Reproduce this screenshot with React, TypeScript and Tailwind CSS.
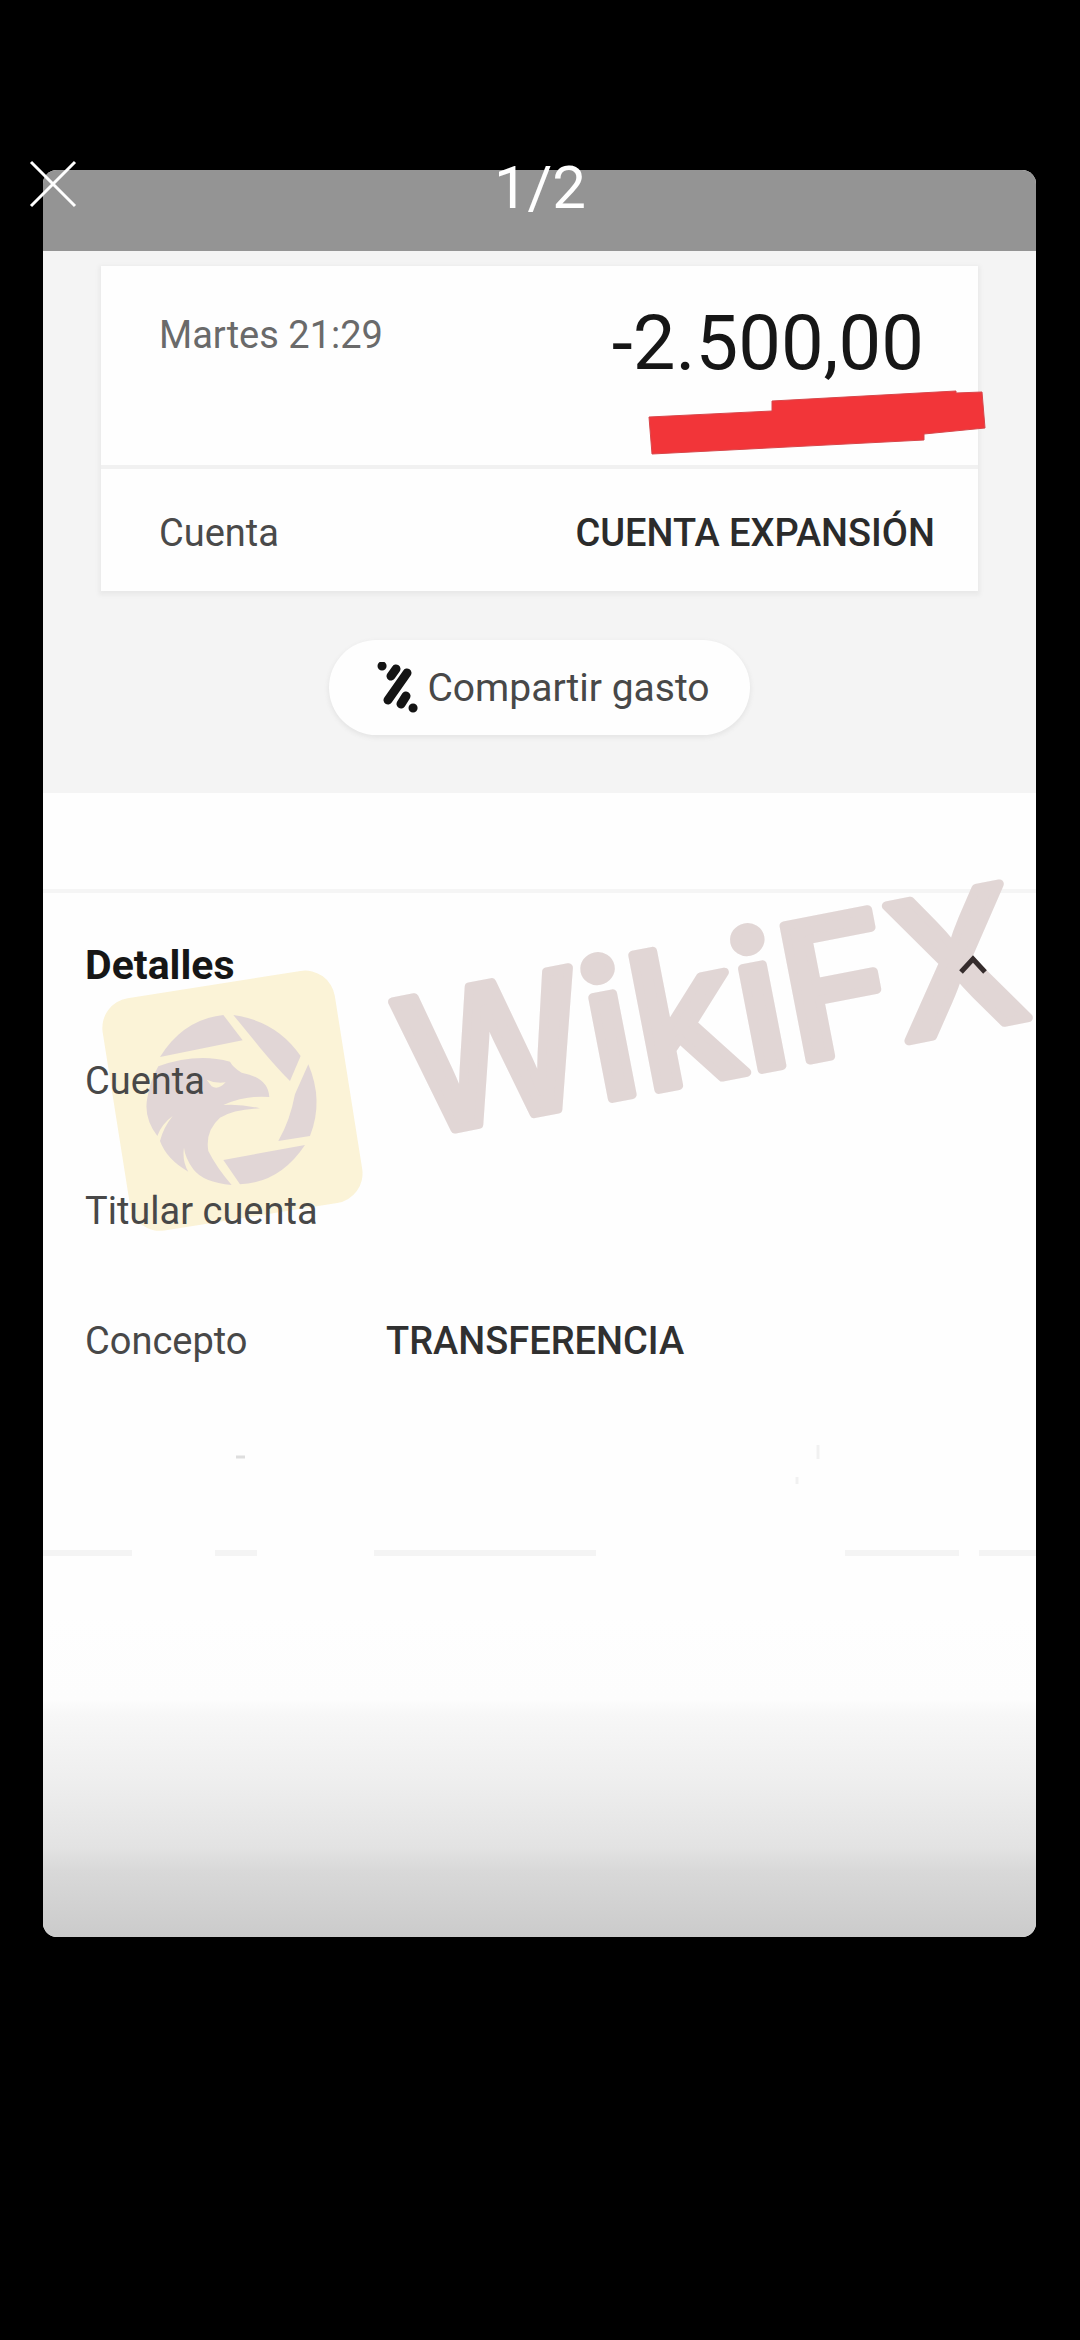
import * as React from 'react';

type Detail = {
  label: string;
  value?: string;
};

const details: Detail[] = [
  { label: 'Cuenta' },
  { label: 'Titular cuenta' },
  { label: 'Concepto', value: 'TRANSFERENCIA' },
];

export default function App() {
  return (
    <div className="relative min-h-screen bg-black pt-[170px] pr-[44px] pb-20 pl-[43px] font-[Roboto,sans-serif]">
      <ViewerHeader />
      <main className="overflow-hidden rounded-[14px] bg-[#fefefe]">
        <div className="h-[81px] bg-[#949494]" />
        <Summary />
        <Details />
        <Footer />
      </main>
    </div>
  );
}

function ViewerHeader() {
  return (
    <header className="absolute inset-x-0 top-[156px] flex h-[64px] items-center justify-center text-white">
      <button
        type="button"
        aria-label="Cerrar"
        className="absolute top-1 left-[29px] flex size-[48px] items-center justify-center"
      >
        <svg viewBox="0 0 48 48" className="size-[48px]" fill="none">
          <path d="M2 2 46 46M46 2 2 46" stroke="currentColor" strokeWidth="3" />
        </svg>
      </button>
      <span className="text-[60px] leading-[72px]">1/2</span>
    </header>
  );
}

function Summary() {
  return (
    <section className="bg-[#f4f4f4] px-[58px] pt-[15px] pb-[58px]">
      <div className="bg-[#fefefe] shadow-[0_2px_4px_2px_#e9e9e9]">
        <div className="relative flex items-start justify-between border-b-4 border-[#f1f1f1] pt-[29px] pr-[54px] pb-[74px] pl-[58px]">
          <span className="pt-4 text-[38px] leading-[48px] text-[#6a6a6a]">
            Martes 21:29
          </span>
          <span className="text-[76px] leading-[96px] text-[#161616]">
            -2.500,00
          </span>
          <RedMark />
        </div>
        <div className="flex items-center justify-between pt-[40px] pr-[43px] pb-[34px] pl-[58px] text-[38px] leading-[48px]">
          <span className="text-[#4a4a4a]">Cuenta</span>
          <span className="font-medium text-[#2b2b2b]">CUENTA EXPANSIÓN</span>
        </div>
      </div>
      <div className="mt-[49px] flex justify-center">
        <button
          type="button"
          className="flex h-[95px] items-center gap-[8px] rounded-full bg-[#fefefe] pr-[40px] pl-[48px] text-[39px] leading-[48px] text-[#484848] shadow-[0_2px_4px_1px_#e6e6e6]"
        >
          <ShareIcon />
          Compartir gasto
        </button>
      </div>
    </section>
  );
}

function Details() {
  return (
    <section className="relative mt-[96px] border-t-4 border-[#f5f5f5] px-[42px] text-[38px] leading-[48px]">
      <Watermark />
      <div className="relative flex items-center justify-between pt-[48px]">
        <h2 className="text-[41px] font-bold text-[#161616]">Detalles</h2>
        <button type="button" aria-label="Ocultar detalles" className="mr-[4px]">
          <svg viewBox="0 0 34 24" className="h-[24px] w-[34px]" fill="none">
            <path d="M5 19 17 6l12 13" stroke="#352c2c" strokeWidth="5" />
          </svg>
        </button>
      </div>
      <dl className="relative flex flex-col gap-[82px] pt-[68px]">
        {details.map((detail) => (
          <div key={detail.label} className="flex">
            <dt className="w-[301px] text-[#484848]">{detail.label}</dt>
            <dd className="font-medium text-[#303030]">{detail.value}</dd>
          </div>
        ))}
      </dl>
    </section>
  );
}

function Footer() {
  return (
    <div className="flex h-[572px] flex-col">
      {/* Broken divider and leftover specks */}
      <svg viewBox="0 0 993 250" className="w-full" aria-hidden="true">
        <path
          d="M0 188h89M172 188h42M331 188h222M802 188h114M936 188h57"
          stroke="#f4f4f4"
          strokeWidth="6"
        />
        <path d="M193 92h9" stroke="#dedede" strokeWidth="3" />
        <path d="M754 112v7M775 80v14" stroke="#f1f1f1" strokeWidth="3" />
      </svg>
      <div className="flex-1 bg-[linear-gradient(to_bottom,#fefefe_0%,#fdfdfd_26%,#f7f7f7_31%,#eeeeee_52%,#e3e3e3_72%,#d9d9d9_79%,#cbcbcb_100%)]" />
    </div>
  );
}

function RedMark() {
  return (
    <svg
      viewBox="0 0 340 66"
      className="absolute top-[123px] -right-[8px] h-[66px] w-[340px]"
      aria-hidden="true"
    >
      <path
        d="M3 28 126 22V12L310 2v2l26-1 3 36-61 6v6L6 65Z"
        fill="#f23539"
        stroke="#d8464a"
        strokeWidth="1"
      />
    </svg>
  );
}

function ShareIcon() {
  return (
    <svg viewBox="0 0 42 52" className="h-[52px] w-[42px]" fill="none">
      <path
        d="M14 14l5-7M11 38 30 11M24 42l5-8M5 4h.1M36 46h.1"
        stroke="#141414"
        strokeWidth="9"
        strokeLinecap="round"
      />
    </svg>
  );
}

function Watermark() {
  return (
    <svg
      viewBox="0 0 993 370"
      className="absolute inset-x-0 top-0 w-full overflow-visible"
      aria-hidden="true"
    >
      <rect
        x="72"
        y="90"
        width="235"
        height="235"
        rx="30"
        fill="#fbf3d7"
        transform="rotate(-9 190.5 208)"
      />
      <g transform="translate(17 28) scale(.3333)" fill="#e1d6d6">
        <path d="M300 408Q370 295 490 282L548 358Z" />
        <path d="M520 282Q650 300 722 405L690 480Q650 440 600 380Z" />
        <path d="M745 430Q792 540 750 645L655 660Q690 600 705 520Z" />
        <path d="M735 672Q660 785 540 790L490 717Z" />
        <path d="M295 436Q410 395 510 422Q520 440 545 455Q625 470 628 528Q560 522 490 552Q540 548 600 562Q520 566 480 590Q435 630 445 690Q470 740 515 792Q430 785 400 745Q375 710 372 680Q366 720 385 752Q320 715 300 660Q310 620 338 585Q304 610 292 645Q250 590 262 530Q270 480 295 436Z" />
        <path d="M440 476Q465 488 497 484Q475 508 455 496Z" fill="#fbf3d7" />
      </g>
      <text
        x="371"
        y="244"
        transform="rotate(-11 371 244)"
        fill="#e1d6d5"
        stroke="#e1d6d5"
        strokeWidth="9"
        strokeLinejoin="round"
        fontFamily="Inter, sans-serif"
        fontSize="188"
        fontWeight="500"
      >
        WikiFX
      </text>
    </svg>
  );
}
